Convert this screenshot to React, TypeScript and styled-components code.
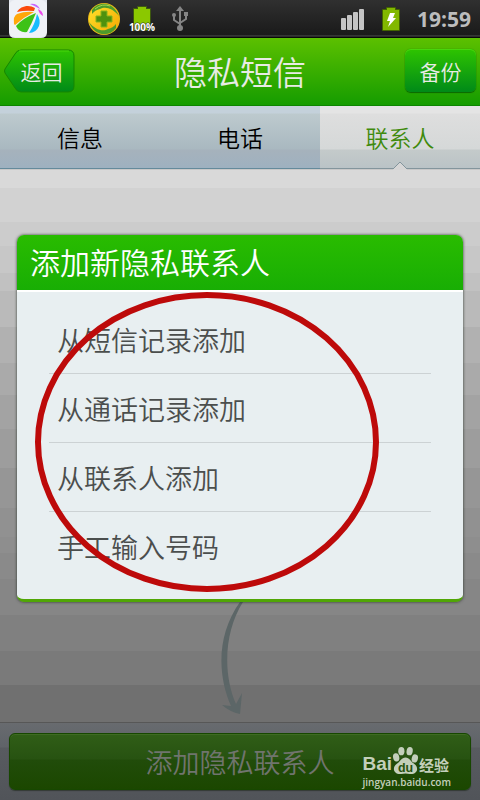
import React from 'react';
import styled, { createGlobalStyle } from 'styled-components';

const GlobalStyle = createGlobalStyle`
  * { box-sizing: border-box; }
  body {
    margin: 0;
    background: #6f6f6f;
    font-family: "Noto Sans CJK SC", sans-serif;
    font-weight: 350;
  }
  button { font: inherit; border: 0; padding: 0; cursor: pointer; }
  svg { display: block; flex: none; }
`;

const Screen = styled.div`
  display: flex;
  flex-direction: column;
  min-height: 100vh;
`;

const StatusBar = styled.div`
  display: flex;
  justify-content: space-between;
  height: 38px;
  padding: 0 9px;
  background: linear-gradient(#303030, #1a1a1a 35px, #505050 36px, #080808 37px);
`;

const StatusGroup = styled.div<{ $gap: number }>`
  display: flex;
  align-items: center;
  gap: ${(p) => p.$gap}px;
`;

const Clock = styled.time`
  font: 700 21px/38px "Open Sans", "Noto Sans", sans-serif;
  color: #bdbdbd;
`;

const Header = styled.header`
  display: grid;
  grid-template-columns: 1fr auto 1fr;
  align-items: center;
  height: 68px;
  padding: 0 4px 2px;
  border-bottom: 1px solid #0d8500;
  background: linear-gradient(#5cc000, #159c00);
`;

const Title = styled.h1`
  margin: 0;
  font-size: 33px;
  line-height: 44px;
  font-weight: 350;
  color: #e8ebe5;
`;

const HeaderButton = styled.button`
  justify-self: end;
  width: 71px;
  height: 43px;
  font-size: 21px;
  line-height: 44px;
  color: #e8ebe5;
  border-radius: 6px;
  background: linear-gradient(#2ec400, #008a18);
  box-shadow: inset 0 1px #48d60c, 0 0 1px #147000, 0 1px 1px #0b6600;
`;

const BackButton = styled.button`
  display: grid;
  justify-self: start;
  width: 72px;
  height: 44px;
  font-size: 21px;
  line-height: 44px;
  color: #e8ebe5;
  background: none;

  > * { grid-area: 1 / 1; }
  > span { padding-left: 3px; z-index: 1; }
`;

const Tabs = styled.div`
  display: grid;
  grid-template-columns: repeat(3, 1fr);
  height: 63px;
`;

const Tab = styled.button<{ $active?: boolean }>`
  position: relative;
  font-size: 23px;
  line-height: 62px;
  color: ${(p) => (p.$active ? '#3f8a0c' : '#000')};
  border-bottom: 1px solid ${(p) => (p.$active ? '#83959c' : '#648a9b')};
  background: ${(p) =>
    p.$active
      ? 'linear-gradient(#e4e4e4 0 7px, #dedede 8px, #d5d8d8 43px, #c4caca 44px, #bac3c6)'
      : 'linear-gradient(#c4d1db 0 7px, #bdcace 8px, #a9b8c0 43px, #a6b2bc 44px, #9eb1c0)'};
`;

const Notch = styled.svg`
  position: absolute;
  left: calc(50% - 7px);
  bottom: -2px;
`;

const Main = styled.main`
  display: flex;
  flex-direction: column;
  flex: 1;
  padding: 66px 17px 0;
  background: linear-gradient(
    #c8c8c8 0 1px, #d9d9d9 1px 19px, #d2d2d2 19px 53px, #cccccc 53px 77px, #c7c7c7 77px 104px,
    #c1c1c1 104px 122px, #bababa 122px 158px, #b1b1b1 158px 194px,
    #aaaaaa 194px 226px, #a3a3a3 226px 260px, #9d9d9d 260px 299px,
    #969696 299px 339px, #919191 339px 368px, #8e8e8e 368px 384px,
    #8a8a8a 384px 410px, #868686 410px 446px, #808080 446px 482px,
    #7a7a7a 482px 516px, #707070 516px
  );
`;

const Dialog = styled.section`
  position: relative;
  border-radius: 7px;
  box-shadow: 0 0 3px rgba(30, 40, 30, 0.9);
`;

const DialogTitle = styled.h2`
  margin: 0;
  padding: 0 13px 3px;
  font-size: 30px;
  line-height: 52px;
  font-weight: 350;
  color: #fff;
  border-radius: 7px 7px 0 0;
  background: linear-gradient(#29bc00, #18ae04);
`;

const Options = styled.ul`
  margin: 0;
  padding: 13px 32px 19px;
  list-style: none;
  border-top: 2px solid #fff;
  border-bottom: 3px solid #50a605;
  border-radius: 0 0 7px 7px;
  background: #e8eff1;
`;

const Option = styled.li`
  & + & { border-top: 1px solid #ccd2d4; }
`;

const OptionButton = styled.button`
  width: 100%;
  padding: 2px 8px 0;
  font-size: 27px;
  line-height: 66px;
  text-align: left;
  color: #4b4e4d;
  background: none;
`;

const Marker = styled.svg`
  position: absolute;
  left: 18px;
  top: 56px;
  pointer-events: none;
`;

const Arrow = styled.svg`
  align-self: center;
  margin-right: 16px;
`;

const Footer = styled.footer`
  padding: 10px 9px;
  height: 78px;
  border-top: 1px solid #575757;
  background: linear-gradient(#686b6f, #5f6368 24px, #585b60 25px, #515459);
`;

const AddButton = styled.button`
  position: relative;
  display: block;
  width: 100%;
  height: 57px;
  font-size: 27px;
  line-height: 54px;
  color: #70746e;
  border: 1px solid #174700;
  border-radius: 6px;
  background: linear-gradient(#305e17, #275211 25px, #214c0a 26px, #1b4700);
  box-shadow: inset 0 1px #3e6b22, 0 1px 1px #333a35;
`;

const Watermark = styled.div`
  position: absolute;
  right: 19px;
  bottom: 0;
  color: #c3cfbb;
`;

const Brand = styled.div`
  display: flex;
  align-items: flex-end;
  font: 700 19px/22px "Liberation Sans", sans-serif;
`;

const BrandCn = styled.span`
  font: 700 15px/20px "Noto Sans CJK SC", sans-serif;
`;

const BrandUrl = styled.div`
  font: 600 10px/14px "Open Sans", sans-serif;
  text-align: left;
`;

const AppIcon = () => (
  <svg width="38" height="38" viewBox="0 0 38 38">
    <path d="M0 0h38v32q0 6-6 6H6q-6 0-6-6Z" fill="#e4e7ee" />
    <rect width="38" height="37" rx="6" fill="#eff1f6" />
    <path d="M8 12C11 6 20 4 26 8l-1 3Q16 10 8 12Z" fill="#fb4a0c" />
    <path d="M5 24Q4 16 8 14q8-3 17-2Q15 17 6 25Z" fill="#ffa70a" />
    <path d="M7 26Q14 18 27 13 23 23 18 32 10 33 7 26Z" fill="#3dc217" />
    <path d="M28 14q4 6 2 12-3 7-10 7Q26 24 28 14Z" fill="#16bcff" />
    <path d="M21 4q7-1 10 5-5-3-10-5Z" fill="#c765ff" />
    <path d="M29 9q5 2 5 7-4-2-5-7Z" fill="#ee4cec" />
  </svg>
);

const ShieldIcon = () => (
  <svg width="32" height="34" viewBox="0 0 32 34">
    <defs>
      <linearGradient id="gold" x1="0" y1="0" x2="1" y2="1">
        <stop offset="0" stopColor="#ffe52e" />
        <stop offset="1" stopColor="#f5a500" />
      </linearGradient>
    </defs>
    <circle cx="16" cy="17" r="16" fill="#e9b818" />
    <circle cx="16" cy="17" r="15" fill="url(#gold)" />
    <path d="M4 8C11-2 26 0 31 14 25 6 17 4 12 7Q7 8 4 12Z" fill="#4d9b2b" />
    <path d="M28 26C21 36 6 34 1 20 7 28 15 30 20 27Q25 26 28 22Z" fill="#4d9b2b" />
    <path d="M7 7Q14 1 22 4" fill="none" stroke="#a8d84d" strokeWidth="1" />
    <path d="M13 9h6v5h5v6h-5v5h-6v-5H8v-6h5Z" fill="#4f910e" stroke="#87b41d" strokeWidth="1" strokeLinejoin="round" />
  </svg>
);

const BatteryPercent = () => (
  <svg width="28" height="38" viewBox="0 0 28 38">
    <path d="M6 9h4V7h8v2h4v21H6Z" fill="none" opacity=".6" stroke="#4d7800" strokeWidth="2" />
    <path d="M6 9h4V7h8v2h4v21H6Z" fill="#8bc800" />
    <text x="14" y="31" textAnchor="middle" fontFamily="Open Sans" fontWeight="700" fontSize="10" fill="#fff" stroke="#222" strokeWidth="1" paintOrder="stroke">100%</text>
  </svg>
);

const UsbIcon = () => (
  <svg width="16" height="26" viewBox="0 0 16 26" fill="none" stroke="#858585" strokeWidth="2">
    <path d="M8 4v18M2 8v6l6 4M14 8v5l-6 4" />
    <path d="m4 5 4-5 4 5Z" fill="#858585" stroke="none" />
    <circle cx="2" cy="9" r="2" fill="#858585" stroke="none" />
    <path d="M12 6h4v4h-4Z" fill="#858585" stroke="none" />
    <circle cx="8" cy="22" r="3" fill="#858585" stroke="none" />
  </svg>
);

const SignalIcon = () => (
  <svg width="24" height="22" viewBox="0 0 24 22" fill="#c4c4c4">
    <rect y="10" width="5" height="12" rx="1" />
    <rect x="6" y="7" width="5" height="15" rx="1" />
    <rect x="12" y="4" width="5" height="18" rx="1" />
    <rect x="18" y="1" width="5" height="21" rx="1" />
  </svg>
);

const ChargingIcon = () => (
  <svg width="20" height="26" viewBox="0 0 20 26">
    <path d="M2 4h4V2h8v2h4v20H2Z" fill="#82b800" stroke="#436500" strokeWidth="2" strokeLinejoin="round" />
    <path d="M2 4h4V2h8v2h4v20H2Z" fill="#82b800" />
    <path d="M9 7h5l-2 5h3L7 21l2-6H6Z" fill="#fff" />
  </svg>
);

const BackShape = () => (
  <svg width="72" height="45" viewBox="0 0 72 45">
    <defs>
      <linearGradient id="back" x1="0" y1="0" x2="0" y2="1">
        <stop offset="0" stopColor="#2ec400" />
        <stop offset="1" stopColor="#008a18" />
      </linearGradient>
    </defs>
    <path d="M17 1h47q6 0 6 6v30q0 6-6 6H17q-4 0-6-4L1 24q-1-2 0-4L11 5q2-4 6-4Z" fill="url(#back)" stroke="#178500" />
    <path d="M15 2h50" stroke="#48d60c" />
  </svg>
);

const PawIcon = () => (
  <svg width="27" height="29" viewBox="0 0 26 28" fill="#c3cfbb">
    <ellipse cx="4" cy="11" rx="3" ry="4" transform="rotate(-12 4 11)" />
    <ellipse cx="9" cy="5" rx="3" ry="4" />
    <ellipse cx="17" cy="5" rx="3" ry="4" transform="rotate(10 17 5)" />
    <ellipse cx="22" cy="12" rx="3" ry="4" transform="rotate(14 22 12)" />
    <path d="M13 11c4 0 5 4 8 6 6 4 3 11-4 10q-4-1-8 0c-7 1-10-6-4-10 3-2 4-6 8-6Z" />
    <text x="13" y="25" textAnchor="middle" fontFamily="Liberation Sans" fontWeight="700" fontSize="12" fill="#28520f">du</text>
  </svg>
);

const options = ['从短信记录添加', '从通话记录添加', '从联系人添加', '手工输入号码'];

export default function App() {
  return (
    <Screen>
      <GlobalStyle />
      <StatusBar>
        <StatusGroup $gap={41}>
          <AppIcon />
          <StatusGroup $gap={8}>
            <ShieldIcon />
            <StatusGroup $gap={16}>
              <BatteryPercent />
              <UsbIcon />
            </StatusGroup>
          </StatusGroup>
        </StatusGroup>
        <StatusGroup $gap={16}>
          <SignalIcon />
          <ChargingIcon />
          <Clock>19:59</Clock>
        </StatusGroup>
      </StatusBar>
      <Header>
        <BackButton>
          <BackShape />
          <span>返回</span>
        </BackButton>
        <Title>隐私短信</Title>
        <HeaderButton>备份</HeaderButton>
      </Header>
      <Tabs role="tablist">
        <Tab role="tab">信息</Tab>
        <Tab role="tab">电话</Tab>
        <Tab role="tab" aria-selected $active>
          联系人
          <Notch width="14" height="9" viewBox="0 0 14 9">
            <path d="M0 8 7 1l7 7v1H0Z" fill="#d6d6d6" />
            <path d="M0 8 7 1l7 7" fill="none" stroke="#83959c" />
          </Notch>
        </Tab>
      </Tabs>
      <Main>
        <Dialog role="dialog" aria-labelledby="dialog-title">
          <DialogTitle id="dialog-title">添加新隐私联系人</DialogTitle>
          <Options>
            {options.map((label) => (
              <Option key={label}>
                <OptionButton>{label}</OptionButton>
              </Option>
            ))}
          </Options>
          <Marker width="344" height="302" viewBox="0 0 344 302">
            <ellipse cx="172" cy="151" rx="169" ry="147" fill="none" stroke="#bd0a0a" strokeWidth="6" />
          </Marker>
        </Dialog>
        <Arrow width="24" height="112" viewBox="0 0 24 112">
          <path d="M20 0h3C5 28 2 70 16 102l6-11-2 21Q10 110 2 103l9 1C-3 72-3 32 20 0Z" fill="#5c6667" />
        </Arrow>
      </Main>
      <Footer>
        <AddButton>
          添加隐私联系人
          <Watermark>
            <Brand>
              Bai
              <PawIcon />
              <BrandCn>经验</BrandCn>
            </Brand>
            <BrandUrl>jingyan.baidu.com</BrandUrl>
          </Watermark>
        </AddButton>
      </Footer>
    </Screen>
  );
}
